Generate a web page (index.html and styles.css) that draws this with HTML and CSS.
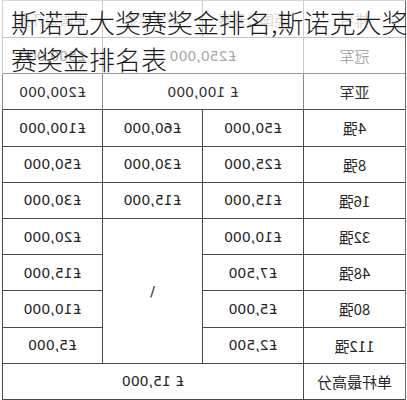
FILE: index.html
```html
<!DOCTYPE html>
<html lang="zh-CN">
<head>
<meta charset="utf-8">
<title>斯诺克大奖赛奖金排名</title>
<link rel="stylesheet" href="styles.css">
</head>
<body>
<div class="page">
  <div class="sheet">
    <div class="cell head lbl">排名</div>
    <div class="cell head">英国公开赛</div>
    <div class="cell head">赛事奖金</div>
    <div class="cell head">中国公开赛</div>

    <div class="cell top lbl">冠军</div>
    <div class="cell top span2">£250,000</div>
    <div class="cell top">£500,000</div>

    <div class="cell second lbl">亚军</div>
    <div class="cell second span2">£ 100,000</div>
    <div class="cell second">£200,000</div>

    <div class="cell lbl">4强</div>
    <div class="cell">£50,000</div>
    <div class="cell">£60,000</div>
    <div class="cell">£100,000</div>

    <div class="cell lbl">8强</div>
    <div class="cell">£25,000</div>
    <div class="cell">£30,000</div>
    <div class="cell">£50,000</div>

    <div class="cell lbl">16强</div>
    <div class="cell">£15,000</div>
    <div class="cell">£15,000</div>
    <div class="cell">£30,000</div>

    <div class="cell lbl">32强</div>
    <div class="cell">£10,000</div>
    <div class="cell rows4"><span class="unflip">/</span></div>
    <div class="cell">£20,000</div>

    <div class="cell lbl">48强</div>
    <div class="cell">£7,500</div>
    <div class="cell">£15,000</div>

    <div class="cell lbl">80强</div>
    <div class="cell">£5,000</div>
    <div class="cell">£10,000</div>

    <div class="cell lbl">112强</div>
    <div class="cell">£2,500</div>
    <div class="cell">£5,000</div>

    <div class="cell lbl">单杆最高分</div>
    <div class="cell span3">£ 15,000</div>
  </div>
  <div class="title">斯诺克大奖赛奖金排名,斯诺克大奖赛奖金排名表</div>
</div>
</body>
</html>
```

FILE: styles.css
```css
html, body {
  margin: 0;
  padding: 0;
  background: #ffffff;
}

.page {
  position: relative;
  width: 407px;
  height: 400px;
  overflow: hidden;
  background: #ffffff;
}

.sheet {
  display: grid;
  grid-template-columns: 102px 101px 100px 100px;
  grid-template-rows: 37px repeat(10, 36.2px);
  width: 403px;
  margin-left: 2px;
  border-left: 1px solid #666666;
  border-top: 1px solid #d6d6d6;
  transform: scaleX(-1);
  font-family: "DejaVu Sans", "Noto Sans CJK SC", sans-serif;
  font-size: 14px;
  color: #262626;
}

.cell {
  box-sizing: border-box;
  display: flex;
  align-items: center;
  justify-content: center;
  border-right: 1px solid #4a4a4a;
  border-bottom: 1px solid #4a4a4a;
  white-space: nowrap;
}

.lbl {
  font-family: "Noto Sans CJK SC", sans-serif;
  font-size: 15px;
}

.head {
  color: #dadada;
  border-right-color: #cfcfcf;
  border-bottom-color: #c4c4c4;
}

.top {
  color: #a8a8a8;
  border-right-color: #c8c8c8;
  border-bottom-color: #9a9a9a;
}

.second {
  color: #333333;
  border-right-color: #8a8a8a;
}

.span2 {
  grid-column: span 2;
}

.span3 {
  grid-column: span 3;
}

.rows4 {
  grid-row: span 4;
}

.unflip {
  display: inline-block;
  transform: scaleX(-1);
}

.title {
  position: absolute;
  top: 3px;
  left: 11px;
  width: 400px;
  font-family: "Noto Sans CJK SC", sans-serif;
  font-size: 26px;
  font-weight: 300;
  line-height: 37px;
  color: #1a1a1a;
}
```
